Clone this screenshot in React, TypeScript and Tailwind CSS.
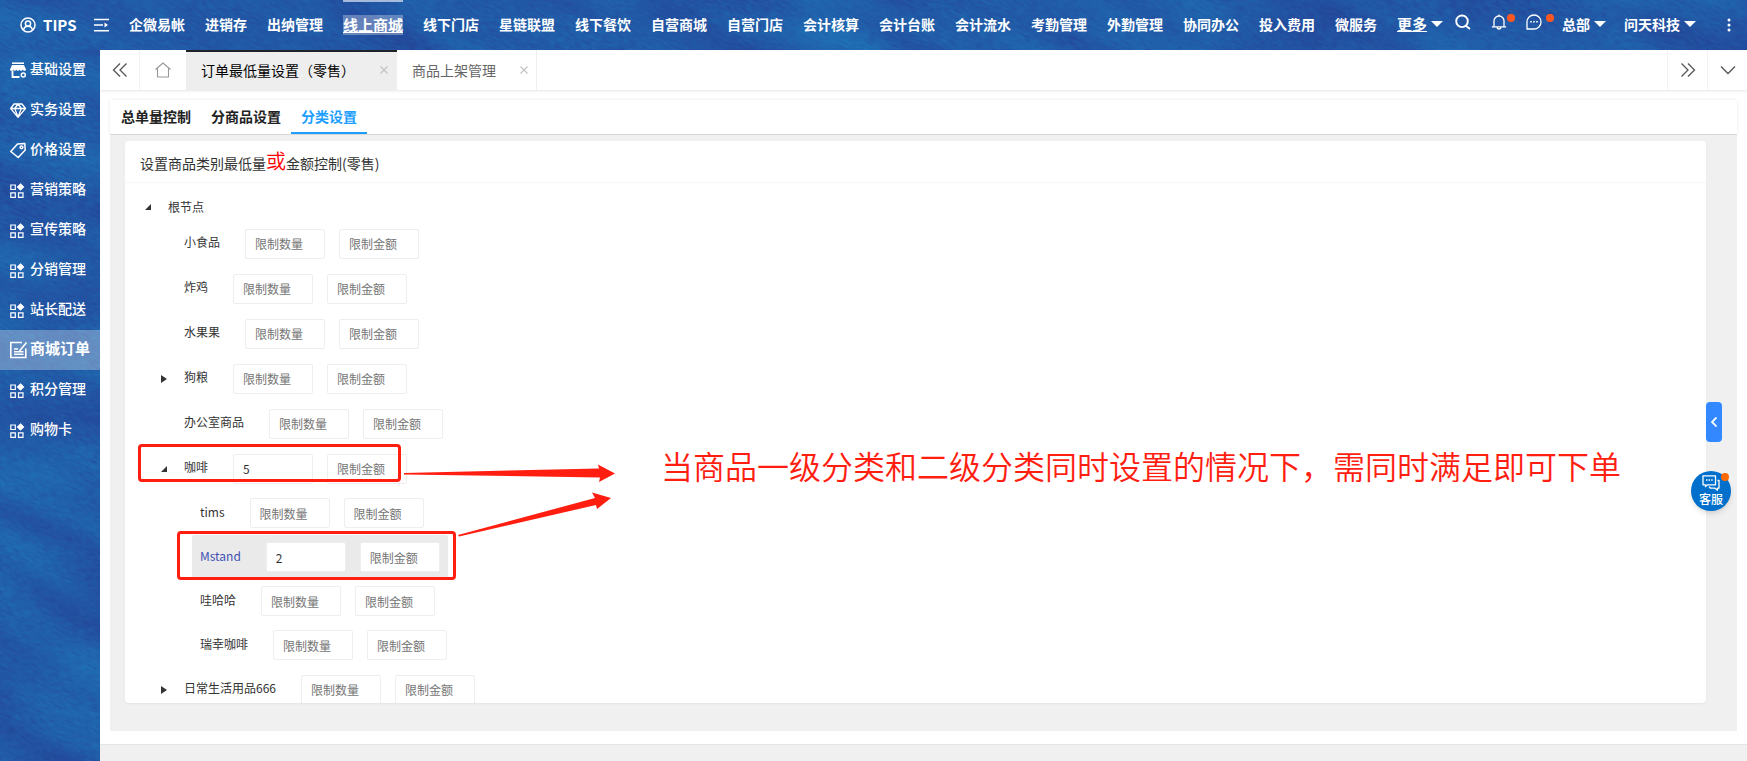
import React, { useState } from 'react';

const NAV = [
  '企微易帐', '进销存', '出纳管理', '线上商城', '线下门店', '星链联盟', '线下餐饮', '自营商城', '自营门店',
  '会计核算', '会计台账', '会计流水', '考勤管理', '外勤管理', '协同办公', '投入费用', '微服务',
];

const MENU = [
  { name: '基础设置', icon: 'shop' },
  { name: '实务设置', icon: 'gem' },
  { name: '价格设置', icon: 'tag' },
  { name: '营销策略', icon: 'grid' },
  { name: '宣传策略', icon: 'grid' },
  { name: '分销管理', icon: 'grid' },
  { name: '站长配送', icon: 'grid' },
  { name: '商城订单', icon: 'edit' },
  { name: '积分管理', icon: 'grid' },
  { name: '购物卡', icon: 'grid' },
];

interface TreeNode {
  name: string;
  qty?: string;
  toggle?: 'open' | 'closed';
  active?: boolean;
  children?: TreeNode[];
}

const TREE: TreeNode[] = [
  { name: '小食品' },
  { name: '炸鸡' },
  { name: '水果果' },
  { name: '狗粮', toggle: 'closed' },
  { name: '办公室商品' },
  {
    name: '咖啡',
    qty: '5',
    toggle: 'open',
    children: [
      { name: 'tims' },
      { name: 'Mstand', qty: '2', active: true },
      { name: '哇哈哈' },
      { name: '瑞幸咖啡' },
    ],
  },
  { name: '日常生活用品666', toggle: 'closed' },
];

// Blue woven backdrop shared by the header and the side menu
const Texture: React.FC<{ id: string; seed: number }> = ({ id, seed }) => (
  <svg className="absolute inset-0 -z-10 h-full w-full" aria-hidden="true">
    <defs>
      <filter id={id} x="0" y="0" width="100%" height="100%" colorInterpolationFilters="sRGB">
        <feTurbulence type="fractalNoise" baseFrequency="0.007 0.022" numOctaves={2} seed={seed} result="wave" />
        <feTurbulence type="fractalNoise" baseFrequency="0.12 0.4" numOctaves={3} seed={seed + 1} result="grain" />
        <feComposite in="wave" in2="grain" operator="arithmetic" k1="0" k2="0.66" k3="0.34" k4="0" />
        <feColorMatrix values="-0.03 0 0 0 0.145  0.3 0 0 0 0.2  0.2 0 0 0 0.55  0 0 0 0 1" />
      </filter>
    </defs>
    <g transform="rotate(24)">
      <rect x="-100" y="-800" width="2000" height="1700" filter={`url(#${id})`} />
    </g>
  </svg>
);

const MenuIcon: React.FC<{ type: string }> = ({ type }) => {
  if (type === 'shop') {
    return (
      <svg viewBox="0 0 18 18" className="h-[18px] w-[18px]" fill="none" stroke="currentColor" strokeWidth="1.5">
        <path d="M2 2.200h12" strokeWidth="1.600" />
        <path d="M2 4h12l2 4.500c0 1.800-2.800 1.800-3.300 0-.4 1.800-2.800 1.800-3.200 0-.4 1.800-2.800 1.800-3.200 0-.4 1.800-2.800 1.800-3.100 0-.5 1.800-3.200 1.800-3.200 0z" fill="currentColor" stroke="none" />
        <path d="M2.500 9.500v6.500h7" strokeWidth="1.800" />
        <circle cx="13.300" cy="14" r="2" />
      </svg>
    );
  }
  if (type === 'gem') {
    return (
      <svg viewBox="0 0 18 18" className="h-[18px] w-[18px]" fill="none" stroke="currentColor" strokeWidth="1.3" strokeLinejoin="round">
        <path d="M4 3h8l3.500 4.500L8 16.300.7 7.500zM.7 7.500h14.800M4.700 7.500 8 16l3.300-8.500M4.700 7.500 8 3l3.300 4.500" />
      </svg>
    );
  }
  if (type === 'tag') {
    return (
      <svg viewBox="0 0 18 18" className="h-[18px] w-[18px]" fill="none" stroke="currentColor" strokeWidth="1.500" strokeLinejoin="round">
        <path d="M.8 10.500 7.500 3l7.300-.5.4 6.500-7 7.500z" />
        <circle cx="11.500" cy="6.300" r="1.400" />
      </svg>
    );
  }
  if (type === 'edit') {
    return (
      <svg viewBox="0 0 18 18" className="h-[18px] w-[18px]" fill="none" stroke="currentColor" strokeWidth="1.600">
        <path d="M12 1.500H.8v15h15V7.500" />
        <path d="m16.500 1.500-7 8.500M4 8h4M4 13.300h9.500M4 10.700h9.500" />
      </svg>
    );
  }
  return (
    <svg viewBox="0 0 18 18" className="h-[18px] w-[18px]" fill="none" stroke="currentColor" strokeWidth="1.200">
      <path d="M.8 4h4.500v4.500H.8zM.8 11.800h4.500v4.500H.8zM8.500 11.800H13v4.500H8.500z" />
      <path d="M10.500 3 13.500 6l-3 3-3-3z" fill="currentColor" />
    </svg>
  );
};

const Caret: React.FC = () => (
  <svg viewBox="0 0 12 6" className="ml-1 h-1.5 w-3" fill="currentColor">
    <path d="M0 0h12L6 6z" />
  </svg>
);

const CloseIcon: React.FC = () => (
  <svg viewBox="0 0 8 8" className="h-2 w-2" fill="none" stroke="#c2c2c2" strokeWidth="1.200">
    <path d="m.5.5 7 7M7.500.5l-7 7" />
  </svg>
);

const Row: React.FC<{ node: TreeNode; sub?: boolean }> = ({ node, sub }) => (
  <div className={`flex ${sub ? 'h-11 pl-4' : 'h-[45px]'}`}>
    <button className="flex w-4 items-center justify-center" aria-label={node.toggle ? node.name : undefined} disabled={!node.toggle}>
      {node.toggle && (
        <svg viewBox="0 0 6 8" className="h-2 w-1.5" fill="#333">
          {node.toggle === 'open' ? <path d="M6 1v6H0z" /> : <path d="M0 0l6 4-6 4z" />}
        </svg>
      )}
    </button>
    <div className={`ml-1 flex items-center rounded-xs px-2 ${node.active ? 'bg-[#eaeaea]' : ''}`}>
      <span className={`pb-[3px] ${node.active ? 'text-[#3f51b5]' : 'text-[#333]'}`}>{node.name}</span>
      <input
        className="ml-[25px] h-[30px] w-20 rounded-xs border border-[#eee] bg-white px-[9px] text-[#333] placeholder:text-[#757575]"
        placeholder="限制数量"
        aria-label={`${node.name} 限制数量`}
        defaultValue={node.qty}
      />
      <input
        className="ml-3.5 h-[30px] w-20 rounded-xs border border-[#eee] bg-white px-[9px] text-[#333] placeholder:text-[#757575]"
        placeholder="限制金额"
        aria-label={`${node.name} 限制金额`}
      />
    </div>
  </div>
);

const Header: React.FC = () => (
  <header className="relative isolate flex h-[50px] shrink-0 overflow-hidden text-sm font-bold text-white">
    <Texture id="weave-top" seed={4} />
    <a href="#tips" className="flex w-[94px] items-center pl-5 text-[15px] leading-5">
      <svg viewBox="0 0 16 16" className="mr-[7px] h-4 w-4" fill="none" stroke="currentColor" strokeWidth="1.500">
        <circle cx="8" cy="8" r="7" />
        <circle cx="8" cy="6.500" r="2.600" />
        <path d="M3.500 13c.5-2.500 2-3.700 4.500-3.700s4 1.200 4.500 3.700" />
      </svg>
      TIPS
    </a>
    <button aria-label="菜单" className="mr-[19px]">
      <svg viewBox="0 0 16 14" className="h-3.5 w-4" fill="none" stroke="currentColor" strokeWidth="1.600">
        <path d="M0 1.500h15M0 7h9M0 12.800h15" />
        <path d="m10.500 4.500 3.500 2.500-3.500 2.500z" fill="currentColor" stroke="none" />
      </svg>
    </button>
    <nav className="flex items-center gap-5 whitespace-nowrap">
      {NAV.map(name =>
        name === '线上商城' ? (
          <a key={name} href="#mall" className="flex h-full items-center border-t-2 border-white/60 pb-0.5 text-[15px] leading-5">
            <span className="bg-white/30 underline">{name}</span>
          </a>
        ) : (
          <a key={name} href="#nav" className="pb-0.5">{name}</a>
        )
      )}
      <a href="#more" className="flex items-center pb-0.5 text-[15px] underline decoration-1">
        更多<Caret />
      </a>
    </nav>
    <div className="ml-3 flex items-center whitespace-nowrap">
      <button aria-label="搜索" className="mb-1.5 w-9">
        <svg viewBox="0 0 16 16" className="h-4 w-4" fill="none" stroke="currentColor" strokeWidth="1.900">
          <circle cx="7" cy="7.300" r="5.800" />
          <path d="m10.500 11.500 4.500 3.500" />
        </svg>
      </button>
      <button aria-label="通知" className="mb-1.5 flex w-[35px]">
        <svg viewBox="0 0 16 16" className="h-4 w-4" fill="none" stroke="currentColor" strokeWidth="1.300">
          <path d="M.8 12.800h14.400M3 12.800V7a5 5 0 0 1 10 0v5.800M6 13.500c.5 2 3.500 2 4 0M8 .5V2" />
        </svg>
        <span className="h-2 w-2 rounded-full bg-[#ff5722]" />
      </button>
      <button aria-label="消息" className="mb-1.5 flex w-9">
        <svg viewBox="0 0 16 16" className="mr-1 h-4 w-4" fill="none" stroke="currentColor" strokeWidth="1.300">
          <path d="M1 15V8a7 7 0 1 1 7 7z" />
          <path d="M4.200 7.800h1.600M7.200 7.800h1.600M10.200 7.800h1.600" strokeWidth="1.600" />
        </svg>
        <span className="h-2 w-2 rounded-full bg-[#ff5722]" />
      </button>
      <a href="#hq" className="mr-[18px] flex items-center pb-0.5">总部 <Caret /></a>
      <a href="#org" className="flex items-center pb-0.5">问天科技 <Caret /></a>
    </div>
    <button aria-label="更多操作" className="mr-4 ml-auto">
      <svg viewBox="0 0 4 14" className="h-3.5 w-1" fill="currentColor">
        <circle cx="2" cy="2" r="1.500" />
        <circle cx="2" cy="7" r="1.500" />
        <circle cx="2" cy="12" r="1.500" />
      </svg>
    </button>
  </header>
);

const Sidebar: React.FC = () => (
  <aside className="relative isolate w-[100px] shrink-0 overflow-hidden text-sm text-white">
    <Texture id="weave-side" seed={11} />
    {MENU.map(item => (
      <a
        key={item.name}
        href="#menu"
        className={`flex h-10 items-center gap-0.5 pl-2.5 whitespace-nowrap ${
          item.icon === 'edit' ? 'bg-white/30 text-[15px] font-bold' : 'font-medium'
        }`}
      >
        <MenuIcon type={item.icon} />
        <span className="pb-1">{item.name}</span>
      </a>
    ))}
  </aside>
);

const PageTabs: React.FC = () => (
  <div className="flex h-[41px] shrink-0 border-b border-[#eee] text-sm text-[#666] shadow-xs">
    <button aria-label="向左" className="flex w-10 items-center justify-center border-r border-[#f2f2f2]">
      <svg viewBox="0 0 16 16" className="h-4 w-4" fill="none" stroke="#555" strokeWidth="1.300">
        <path d="M8 1.500 1.500 8 8 14.500M14.500 1.500 8 8l6.500 6.500" />
      </svg>
    </button>
    <button aria-label="首页" className="flex w-[46px] items-center justify-center">
      <svg viewBox="0 0 16 16" className="h-4 w-4" fill="none" stroke="#999" strokeWidth="1.100">
        <path d="M.5 7.500 8 1l7.500 6.500M2.500 6.500V15h11V6.500" />
      </svg>
    </button>
    <div className="flex w-[211px] items-center justify-between border-t-2 border-[#20222a] bg-[#eee] pr-[9px] pb-0.5 pl-[15px] text-black">
      <a href="#min">订单最低量设置（零售）</a>
      <button aria-label="关闭"><CloseIcon /></button>
    </div>
    <div className="flex w-[140px] items-center justify-between border-r border-[#eee] pr-2 pl-[15px]">
      <a href="#shelf">商品上架管理</a>
      <button aria-label="关闭"><CloseIcon /></button>
    </div>
    <button aria-label="向右" className="ml-auto flex w-10 items-center justify-center border-l border-[#f2f2f2]">
      <svg viewBox="0 0 16 16" className="h-4 w-4" fill="none" stroke="#555" strokeWidth="1.300">
        <path d="M1.500 1.500 8 8l-6.500 6.500M8 1.500 14.500 8 8 14.500" />
      </svg>
    </button>
    <button aria-label="展开" className="flex w-10 items-center justify-center border-l border-[#f2f2f2]">
      <svg viewBox="0 0 16 16" className="h-4 w-4" fill="none" stroke="#555" strokeWidth="1.300">
        <path d="m1 4.500 7 7 7-7" />
      </svg>
    </button>
  </div>
);

// Red boxes, arrows and the remark drawn over the tree
const Notes: React.FC = () => (
  <div className="pointer-events-none absolute inset-0 text-[#ff1e10]">
    <div className="absolute top-[303px] left-[13px] h-[38px] w-[263px] rounded-sm border-3 border-current" />
    <div className="absolute top-[390px] left-[52px] h-[49px] w-[279px] rounded-sm border-3 border-current" />
    <svg viewBox="0 0 220 80" className="absolute top-[319px] left-[275px] h-20 w-[220px]" fill="currentColor">
      <path d="M4 13 199 8.500 198 4.500 215 13.500 199 22 200 17.500 4 14.500z" />
      <path d="M58 75 195 38 192 32.500 211 38 197 49 196 45 59 76.500z" />
    </svg>
    <p className="absolute top-[300px] left-[536px] text-[32px] leading-[48px] font-[350] whitespace-nowrap">
      当商品一级分类和二级分类同时设置的情况下，需同时满足即可下单
    </p>
  </div>
);

export default function App() {
  const [tab, setTab] = useState('分类设置');

  return (
    <div className="flex h-screen flex-col overflow-hidden bg-white font-['Noto_Sans_CJK_SC',sans-serif]">
      <Header />
      <div className="flex min-h-0 flex-1">
        <Sidebar />
        <main className="flex min-w-0 flex-1 flex-col">
          <PageTabs />
          <div className="mx-2.5 mt-[9px] mb-[13px] flex min-h-0 flex-1 flex-col">
            <div className="flex h-[35px] shrink-0 border-b border-[#d8d8d8] pl-px text-sm font-bold shadow-[0_0_3px_#e8e8e8]">
              {['总单量控制', '分商品设置', '分类设置'].map(name => (
                <button
                  key={name}
                  onClick={() => setTab(name)}
                  className={`border-b-2 px-2.5 ${tab === name ? 'border-[#1e9fff] text-[#1e9fff]' : 'border-transparent text-[#222]'}`}
                >
                  {name}
                </button>
              ))}
            </div>
            <div className="relative flex min-h-0 flex-1 flex-col bg-[#f0f0f0] pt-1.5 pr-[31px] pb-7 pl-[15px]">
              <section className="relative min-h-0 flex-1 overflow-hidden rounded-sm bg-white shadow-xs">
                <h2 className="flex h-[42px] items-center border-b border-[#f6f6f6] px-[15px] text-sm text-[#333]">
                  <span>
                    设置商品类别最低量<span className="text-[20px] leading-5 font-[350] text-[#f00]">或</span>金额控制(零售)
                  </span>
                </h2>
                <div className="px-[15px] pt-2.5 text-xs">
                  <div className="flex h-7">
                    <button className="flex w-4 items-center justify-center" aria-label="根节点">
                      <svg viewBox="0 0 6 8" className="h-2 w-1.5" fill="#333"><path d="M6 1v6H0z" /></svg>
                    </button>
                    <span className="ml-1 flex items-center px-2 text-[#333]">根节点</span>
                  </div>
                  <div className="pl-4">
                    {TREE.map(node => (
                      <React.Fragment key={node.name}>
                        <Row node={node} />
                        {node.children?.map(child => <Row key={child.name} node={child} sub />)}
                      </React.Fragment>
                    ))}
                  </div>
                </div>
                <Notes />
              </section>
              <button aria-label="收起" className="absolute top-[267px] right-[15px] flex h-10 w-4 items-center justify-center rounded-sm bg-[#3388ff]">
                <svg viewBox="0 0 6 10" className="h-2.5 w-1.5" fill="none" stroke="#fff" strokeWidth="1.800">
                  <path d="M5.500.5 1 5l4.500 4.500" />
                </svg>
              </button>
              <button className="absolute top-[336px] right-1.5 flex h-10 w-10 flex-col items-center rounded-full bg-[#0070cc] pt-1 text-xs font-medium text-white shadow-md">
                <svg viewBox="0 0 18 16" className="h-4 w-[18px] shrink-0" fill="none" stroke="currentColor" strokeWidth="1.300" strokeLinejoin="round">
                  <path d="M1 .8h12.500v9H5.500L3.500 11.500V9.800H1z" />
                  <path d="M15.500 5.500H17v7.700h-1.500v2l-2.500-2H8.500l-1.500-1.500" />
                  <path d="M4 5h1.500M6.600 5h1.500M9.200 5h1.500" strokeWidth="1.600" />
                </svg>
                <span className="leading-4">客服</span>
                <span className="absolute top-0.5 right-0.5 h-2 w-2 rounded-full bg-[#ff6a00]" />
              </button>
            </div>
          </div>
          <footer className="h-[17px] shrink-0 border-t border-[#e4e4e4] bg-[#f0f0f0]" />
        </main>
      </div>
    </div>
  );
}
